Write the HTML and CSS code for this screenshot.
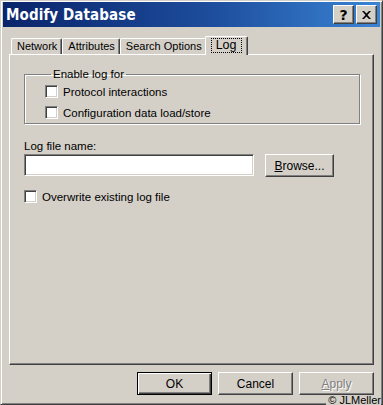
FILE: index.html
```html
<!DOCTYPE html>
<html lang="en">
<head>
    <meta charset="UTF-8">
    <title>Modify Database</title>
    <link rel="stylesheet" href="styles.css">
</head>
<body>
    <div class="window">
        <!-- Заголовок окна -->
        <div class="titlebar">
            <span class="title">Modify Database</span>
            <div class="title-buttons">
                <span class="cap-btn">?</span>
                <span class="cap-btn cap-close">
                    <svg width="9" height="8" viewBox="0 0 9 8"><path d="M0 0h2l2.5 2.5L7 0h2L5.5 4 9 8H7L4.5 5.5 2 8H0l3.5-4z" fill="#000"/></svg>
                </span>
            </div>
        </div>

        <div class="client">
            <!-- Вкладки -->
            <div class="tabs">
                <div class="tab">Network</div>
                <div class="tab">Attributes</div>
                <div class="tab">Search Options</div>
                <div class="tab tab-active"><span class="focus">Log</span></div>
            </div>

            <div class="panel">
                <fieldset class="group">
                    <legend>Enable log for</legend>
                    <label class="check"><span class="box"></span>Protocol interactions</label>
                    <label class="check"><span class="box"></span>Configuration data load/store</label>
                </fieldset>

                <div class="field-label">Log file name:</div>
                <div class="file-row">
                    <div class="edit"></div>
                    <div class="btn btn-browse"><u>B</u>rowse...</div>
                </div>

                <label class="check check-plain"><span class="box"></span>Overwrite existing log file</label>
            </div>

            <!-- Кнопки диалога -->
            <div class="actions">
                <div class="btn btn-default">OK</div>
                <div class="btn">Cancel</div>
                <div class="btn btn-disabled"><u>A</u>pply</div>
            </div>
        </div>

        <div class="credit">© JLMeller</div>
    </div>
</body>
</html>
```

FILE: styles.css
```css
* {
    margin: 0;
    padding: 0;
    box-sizing: border-box;
}

html, body {
    width: 383px;
    height: 405px;
    overflow: hidden;
    background: #d4d0c8;
    font-family: 'Liberation Sans', Arial, sans-serif;
    font-size: 11px;
    color: #000;
}

/* Окно */
.window {
    position: relative;
    width: 383px;
    height: 405px;
    padding: 1px 2px 2px 2px;
    background: #d4d0c8;
    border-top: 1px solid #d4d0c8;
    border-left: 1px solid #d4d0c8;
    border-right: 1px solid #404040;
    border-bottom: 1px solid #404040;
    box-shadow: inset 1px 1px #fff, inset -1px -1px #808080;
}

.titlebar {
    height: 25px;
    display: flex;
    align-items: center;
    justify-content: space-between;
    padding: 0 3px 0 3px;
    background: linear-gradient(to right, #0a246a 0%, #1d4d9c 55%, #3a84d4 100%);
}

.title {
    color: #fff;
    font-family: 'DejaVu Sans Condensed', 'DejaVu Sans', sans-serif;
    font-weight: bold;
    font-size: 15px;
    letter-spacing: 0.1px;
}

.title-buttons {
    display: flex;
    gap: 2px;
}

.cap-btn {
    width: 21px;
    height: 19px;
    display: flex;
    justify-content: center;
    align-items: center;
    background: #d4d0c8;
    font-family: 'DejaVu Sans', sans-serif;
    font-weight: bold;
    font-size: 14px;
    border-top: 1px solid #fff;
    border-left: 1px solid #fff;
    border-right: 1px solid #404040;
    border-bottom: 1px solid #404040;
    box-shadow: inset -1px -1px #808080;
}

.client {
    padding: 9px 6px 0 6px;
}

/* Вкладки */
.tabs {
    display: flex;
    align-items: flex-end;
    height: 18px;
    padding-left: 2px;
    position: relative;
    z-index: 2;
}

.tab {
    height: 16px;
    padding: 0 4px 0 5px;
    line-height: 14px;
    border-top: 1px solid #fff;
    border-left: 1px solid #fff;
    border-right: 1px solid #404040;
    border-radius: 2px 2px 0 0;
    box-shadow: inset -1px 0 #808080;
    background: #d4d0c8;
    font-size: 11px;
}

.tab-active {
    height: 19px;
    margin: 0 0 -1px -2px;
    padding: 2px 6px 0 6px;
    line-height: 13px;
    font-size: 12.5px;
}

.focus {
    display: inline-block;
    padding: 0 4px;
    outline: 1px dotted #000;
    outline-offset: 0;
}

.panel {
    height: 311px;
    padding: 13px 13px 0 14px;
    border-top: 1px solid #fff;
    border-left: 1px solid #fff;
    border-right: 1px solid #404040;
    border-bottom: 1px solid #404040;
    box-shadow: inset -1px -1px #808080;
}

/* Группа флажков */
.group {
    height: 56px;
    border: 1px solid #808080;
    box-shadow: inset 1px 1px #fff, 1px 1px #fff;
    padding: 5px 0 0 20px;
    display: flex;
    flex-direction: column;
    gap: 8px;
}

.group legend {
    padding: 0 2px;
    margin-left: 6px;
    font-size: 11.5px;
}

.check {
    display: flex;
    align-items: center;
    gap: 5px;
    height: 13px;
    font-size: 11.5px;
}

.box {
    width: 13px;
    height: 13px;
    background: #fff;
    border-top: 1px solid #808080;
    border-left: 1px solid #808080;
    border-right: 1px solid #fff;
    border-bottom: 1px solid #fff;
    box-shadow: inset 1px 1px #404040, inset -1px -1px #d4d0c8;
}

.field-label {
    margin-top: 16px;
    font-size: 11.5px;
}

.file-row {
    display: flex;
    gap: 11px;
    margin-top: 2px;
}

.edit {
    width: 230px;
    height: 22px;
    background: #fff;
    border-top: 1px solid #808080;
    border-left: 1px solid #808080;
    border-right: 1px solid #fff;
    border-bottom: 1px solid #fff;
    box-shadow: inset 1px 1px #404040, inset -1px -1px #d4d0c8;
}

/* Кнопки */
.btn {
    width: 75px;
    height: 23px;
    display: flex;
    justify-content: center;
    align-items: center;
    font-size: 12px;
    background: #d4d0c8;
    border-top: 1px solid #fff;
    border-left: 1px solid #fff;
    border-right: 1px solid #404040;
    border-bottom: 1px solid #404040;
    box-shadow: inset -1px -1px #808080;
}

.btn-browse {
    width: 69px;
}

.btn-default {
    border: 1px solid #000;
    box-shadow: inset 1px 1px #fff, inset -1px -1px #404040, inset -2px -2px #808080;
}

.btn-disabled {
    color: #808080;
    text-shadow: 1px 1px #fff;
}

.check-plain {
    margin-top: 13px;
}

.actions {
    display: flex;
    justify-content: flex-end;
    gap: 6px;
    margin-top: 7px;
}

.credit {
    position: absolute;
    right: 1px;
    bottom: -2px;
    font-size: 11px;
    line-height: 11px;
    background: #d4d0c8;
    padding-left: 2px;
}
```
